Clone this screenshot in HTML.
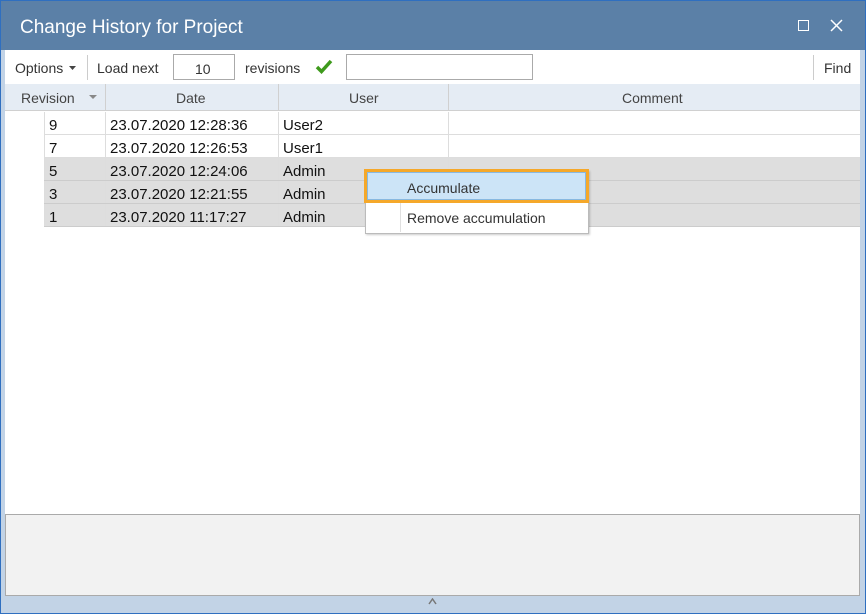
<!DOCTYPE html>
<html><head><meta charset="utf-8"><style>
*{margin:0;padding:0;box-sizing:border-box}
body{width:866px;height:614px;overflow:hidden;background:#fff;font-family:"Liberation Sans",sans-serif;position:relative}
.abs{position:absolute}
.t{color:#333;font-size:14px;white-space:nowrap}
.cell{position:absolute;font-size:15px;color:#111;white-space:nowrap}
</style></head><body>
<div class="abs" style="left:0;top:0;width:866px;height:614px;background:#c2d3e6;border:1px solid #2f6fc0"></div>
<div class="abs" style="left:1px;top:1px;width:864px;height:49px;background:#5b80a7"></div>
<div class="abs" style="left:20px;top:17px;color:#fff;font-size:19px">Change History for Project</div>
<div class="abs" style="left:798px;top:20px;width:11px;height:11px;border:1.5px solid #fff"></div>
<svg class="abs" style="left:830px;top:19px" width="13" height="13"><path d="M1 1L12 12M12 1L1 12" stroke="#fff" stroke-width="1.5"/></svg>
<div class="abs" style="left:5px;top:50px;width:855px;height:464px;background:#fff"></div>
<div class="abs t" style="left:15px;top:60px">Options</div>
<svg class="abs" style="left:69px;top:66px" width="8" height="5"><path d="M0 0H7L3.5 4Z" fill="#444"/></svg>
<div class="abs" style="left:87px;top:55px;width:1px;height:25px;background:#ccc"></div>
<div class="abs t" style="left:97px;top:60px">Load next</div>
<div class="abs" style="left:173px;top:54px;width:62px;height:26px;border:1px solid #aaa"></div>
<div class="abs t" style="left:195px;top:61px">10</div>
<div class="abs t" style="left:245px;top:60px">revisions</div>
<svg class="abs" style="left:315px;top:59px" width="18" height="15"><path d="M2 8L6.5 12.5L16 2" stroke="#3e9a1c" stroke-width="3.5" fill="none"/></svg>
<div class="abs" style="left:346px;top:54px;width:187px;height:26px;border:1px solid #aaa"></div>
<div class="abs" style="left:813px;top:55px;width:1px;height:25px;background:#ccc"></div>
<div class="abs t" style="left:824px;top:60px">Find</div>
<div class="abs" style="left:5px;top:84px;width:855px;height:27px;background:#e5ecf4;border-bottom:1px solid #d0d0d0"></div>
<div class="abs t" style="left:21px;top:90px;color:#444">Revision</div>
<svg class="abs" style="left:89px;top:95px" width="9" height="5"><path d="M0 0H8L4 4Z" fill="#888"/></svg>
<div class="abs" style="left:105px;top:84px;width:1px;height:27px;background:#d0d0d0"></div>
<div class="abs t" style="left:176px;top:90px;color:#444">Date</div>
<div class="abs" style="left:278px;top:84px;width:1px;height:27px;background:#d0d0d0"></div>
<div class="abs t" style="left:349px;top:90px;color:#444">User</div>
<div class="abs" style="left:448px;top:84px;width:1px;height:27px;background:#d0d0d0"></div>
<div class="abs t" style="left:622px;top:90px;color:#444">Comment</div>
<div class="abs" style="left:44px;top:158px;width:816px;height:69px;background:#dedede"></div>
<div class="abs" style="left:44px;top:112px;width:1px;height:115px;background:#ddd"></div>
<div class="abs" style="left:105px;top:112px;width:1px;height:115px;background:#ddd"></div>
<div class="abs" style="left:278px;top:112px;width:1px;height:115px;background:#ddd"></div>
<div class="abs" style="left:448px;top:112px;width:1px;height:115px;background:#ddd"></div>
<div class="abs" style="left:44px;top:134px;width:816px;height:1px;background:#ddd"></div>
<div class="abs" style="left:44px;top:157px;width:816px;height:1px;background:#ddd"></div>
<div class="abs" style="left:44px;top:180px;width:816px;height:1px;background:#ccc"></div>
<div class="abs" style="left:44px;top:203px;width:816px;height:1px;background:#ccc"></div>
<div class="abs" style="left:44px;top:226px;width:816px;height:1px;background:#ccc"></div>
<div class="cell" style="left:49px;top:117px">9</div><div class="cell" style="left:110px;top:117px">23.07.2020 12:28:36</div><div class="cell" style="left:283px;top:117px">User2</div>
<div class="cell" style="left:49px;top:140px">7</div><div class="cell" style="left:110px;top:140px">23.07.2020 12:26:53</div><div class="cell" style="left:283px;top:140px">User1</div>
<div class="cell" style="left:49px;top:163px">5</div><div class="cell" style="left:110px;top:163px">23.07.2020 12:24:06</div><div class="cell" style="left:283px;top:163px">Admin</div>
<div class="cell" style="left:49px;top:186px">3</div><div class="cell" style="left:110px;top:186px">23.07.2020 12:21:55</div><div class="cell" style="left:283px;top:186px">Admin</div>
<div class="cell" style="left:49px;top:209px">1</div><div class="cell" style="left:110px;top:209px">23.07.2020 11:17:27</div><div class="cell" style="left:283px;top:209px">Admin</div>
<div class="abs" style="left:365px;top:170px;width:224px;height:64px;background:#fff;border:1px solid #bbb;box-shadow:1px 1px 2px rgba(0,0,0,.2)"></div>
<div class="abs" style="left:400px;top:202px;width:1px;height:30px;background:#e0e0e0"></div>
<div class="abs" style="left:364px;top:169px;width:225px;height:34px;border:3px solid #f5a82a;background:#cce4f7;box-shadow:inset 0 0 0 1px #88b8e0"></div>
<div class="abs t" style="left:407px;top:180px">Accumulate</div>
<div class="abs t" style="left:407px;top:210px">Remove accumulation</div>
<div class="abs" style="left:5px;top:514px;width:855px;height:82px;background:#f2f2f2;border:1px solid #aaa"></div>
<svg class="abs" style="left:428px;top:598px" width="9" height="7"><path d="M1 6L4.5 1L8 6" stroke="#777" stroke-width="1.5" fill="none"/></svg>
</body></html>
